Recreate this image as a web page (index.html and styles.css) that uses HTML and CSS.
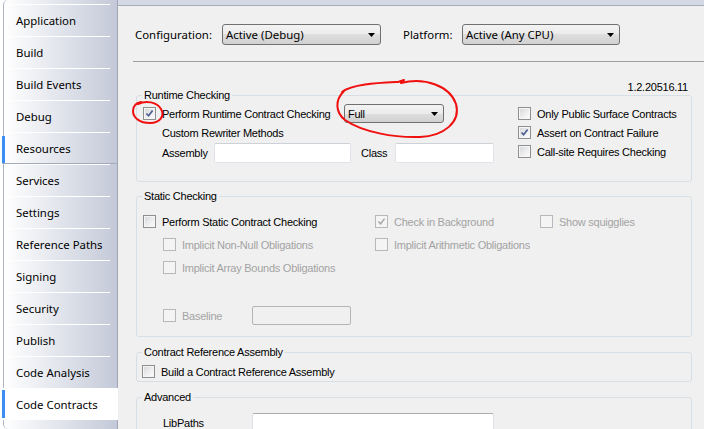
FILE: index.html
```html
<!DOCTYPE html>
<html>
<head>
<meta charset="utf-8">
<title>Code Contracts</title>
<link rel="stylesheet" href="styles.css">
</head>
<body>
<div class="page">
  <nav class="sidebar">
    <div class="tabs">
      <div class="tab">Application</div>
      <div class="tab">Build</div>
      <div class="tab">Build Events</div>
      <div class="tab">Debug</div>
      <div class="tab focus">Resources</div>
      <div class="tab">Services</div>
      <div class="tab">Settings</div>
      <div class="tab">Reference Paths</div>
      <div class="tab">Signing</div>
      <div class="tab">Security</div>
      <div class="tab">Publish</div>
      <div class="tab">Code Analysis</div>
      <div class="tab active">Code Contracts</div>
    </div>
  </nav>
  <main class="main">
    <div class="topband"></div>
    <div class="config">
      <span class="cfg-label">Configuration:</span>
      <div class="combo combo-cfg"><span>Active (Debug)</span><svg class="arrow" width="7" height="4" viewBox="0 0 7 4"><path d="M0 0H7L3.5 4Z"/></svg></div>
      <span class="plat-label">Platform:</span>
      <div class="combo combo-plat"><span>Active (Any CPU)</span><svg class="arrow" width="7" height="4" viewBox="0 0 7 4"><path d="M0 0H7L3.5 4Z"/></svg></div>
    </div>
    <div class="rule"></div>
    <div class="version">1.2.20516.11</div>

    <fieldset class="group g-runtime">
      <legend>Runtime Checking</legend>
      <div class="rt">
        <div class="rt-left">
          <div class="row h19">
            <div class="opt w201"><span class="cb"><svg width="11" height="11" viewBox="0 0 11 11"><path d="M2.5 5.5L4.6 7.8L8.6 2.6" fill="none" stroke="#4b5d8f" stroke-width="1.7"/></svg></span><span>Perform Runtime Contract Checking</span></div>
            <div class="combo combo-full"><span>Full</span><svg class="arrow" width="7" height="4" viewBox="0 0 7 4"><path d="M0 0H7L3.5 4Z"/></svg></div>
          </div>
          <div class="row h19 ind"><span>Custom Rewriter Methods</span></div>
          <div class="row h20 ind mt1">
            <span class="lab-asm">Assembly</span><span class="tb tb-asm"></span>
            <span class="lab-cls">Class</span><span class="tb tb-cls"></span>
          </div>
        </div>
        <div class="rt-right">
          <div class="opt h19"><span class="cb"></span><span>Only Public Surface Contracts</span></div>
          <div class="opt h19"><span class="cb"><svg width="11" height="11" viewBox="0 0 11 11"><path d="M2.5 5.5L4.6 7.8L8.6 2.6" fill="none" stroke="#4b5d8f" stroke-width="1.7"/></svg></span><span>Assert on Contract Failure</span></div>
          <div class="opt h19"><span class="cb"></span><span>Call-site Requires Checking</span></div>
        </div>
      </div>
    </fieldset>

    <fieldset class="group g-static">
      <legend>Static Checking</legend>
      <div class="st">
        <div class="opt c1"><span class="cb"></span><span>Perform Static Contract Checking</span></div>
        <div class="opt dis"><span class="cb"><svg width="11" height="11" viewBox="0 0 11 11"><path d="M2.5 5.5L4.6 7.8L8.6 2.6" fill="none" stroke="#a7a7a7" stroke-width="1.5"/></svg></span><span>Check in Background</span></div>
        <div class="opt dis"><span class="cb"></span><span>Show squigglies</span></div>
        <div class="opt c1i dis"><span class="cb"></span><span>Implicit Non-Null Obligations</span></div>
        <div class="opt dis"><span class="cb"></span><span>Implicit Arithmetic Obligations</span></div>
        <div></div>
        <div class="opt c1i dis"><span class="cb"></span><span>Implicit Array Bounds Obligations</span></div>
        <div></div>
        <div></div>
      </div>
      <div class="row h19 baseline dis">
        <div class="opt w89"><span class="cb"></span><span>Baseline</span></div>
        <span class="tb tb-base"></span>
      </div>
    </fieldset>

    <fieldset class="group g-cra">
      <legend>Contract Reference Assembly</legend>
      <div class="opt h19 cra-row"><span class="cb"></span><span>Build a Contract Reference Assembly</span></div>
    </fieldset>

    <fieldset class="group g-adv">
      <legend>Advanced</legend>
      <div class="row h20 ind2">
        <span class="lab-lib">LibPaths</span><span class="tb tb-lib"></span>
      </div>
    </fieldset>
  </main>

  <svg class="annot" width="704" height="429" viewBox="0 0 704 429">
    <path d="M138 104C146 100 157 102 161 109C165 116 160 123 150 123C140 123 133 118 133 111C133 106 136 103 141 102" fill="none" stroke="#f01010" stroke-width="2" stroke-linecap="round"/>
    <path d="M342 92C352 84 378 83 398 82L404 80L401 83C425 77 450 86 456 104C461 122 444 136 420 137C395 138 362 132 345 120C335 112 335 100 344 91" fill="none" stroke="#f01010" stroke-width="2" stroke-linecap="round" stroke-linejoin="round"/>
  </svg>
</div>
</body>
</html>
```

FILE: styles.css
```css
* { box-sizing: border-box; }
html, body { margin: 0; padding: 0; }
body {
  width: 704px;
  height: 429px;
  overflow: hidden;
  background: #fff;
  font-family: "Liberation Sans", Arial, sans-serif;
  font-size: 11px;
  letter-spacing: -0.25px;
  color: #000;
}
.page {
  position: relative;
  display: flex;
  width: 704px;
  height: 429px;
  overflow: hidden;
}

/* Sidebar */
.sidebar {
  flex: 0 0 118px;
  padding-left: 3px;
  background: #fff;
  display: flex;
}
.tabs {
  flex: 1;
  border-left: 1px solid #aeb4c1;
  border-right: 1px solid #a0a6b4;
  border-radius: 5px 0 0 5px;
  background: linear-gradient(to right, #ffffff, #c3c9d8);
  padding-top: 4px;
  font-family: "Noto Sans", "Open Sans", sans-serif;
  font-size: 11.4px;
  letter-spacing: 0;
}
.tab {
  height: 32px;
  padding-top: 1px;
  line-height: 31px;
  padding-left: 12px;
  background: linear-gradient(#fff, #fff) no-repeat 3px 0 / 103px 1px;
  white-space: nowrap;
}
.tab.focus {
  margin-left: -2px;
  padding-left: 14px;
  background:
    linear-gradient(#3b8ef3, #3b8ef3) no-repeat 0 4px / 3px 27px,
    linear-gradient(#fff, #fff) no-repeat 5px 0 / 103px 1px;
  box-shadow: inset 0 -1px 0 #a2aabb;
}
.tab.active {
  margin-left: -2px;
  margin-right: -1px;
  padding-left: 14px;
  background:
    linear-gradient(#3b8ef3, #3b8ef3) no-repeat 0 2px / 3px 28px,
    #fff;
}

/* Main */
.main {
  flex: 1;
  background: #f0f0f0;
  display: flex;
  flex-direction: column;
  padding-right: 13px;
  min-width: 0;
}
.topband {
  flex: 0 0 6px;
  margin-right: -13px;
  background: #d4dae5;
  border-bottom: 1px solid #a6acb8;
}
.config {
  display: flex;
  align-items: center;
  height: 21px;
  margin-top: 18px;
  padding-left: 17px;
  font-family: "Noto Sans", "Open Sans", sans-serif;
  font-size: 11.4px;
  letter-spacing: 0;
}
.cfg-label { width: 87px; }
.plat-label { width: 59px; margin-left: 22px; }
.combo {
  display: flex;
  align-items: center;
  justify-content: space-between;
  border: 1px solid #707070;
  border-radius: 3px;
  background: linear-gradient(#f3f3f3 0%, #ebebeb 50%, #dedede 50%, #d1d1d1 100%);
  padding: 0 5px 0 3px;
  white-space: nowrap;
}
.combo-cfg { width: 159px; height: 21px; }
.combo-plat { width: 158px; height: 21px; }
.combo-full { width: 100px; height: 19px; padding-left: 3px; }
.arrow { display: block; fill: #000; }

.rule {
  height: 1px;
  margin: 16px -13px 0 15px;
  background: #a0a0a0;
  flex: 0 0 1px;
}
.version {
  margin-top: 19px;
  line-height: 13px;
  text-align: right;
  padding-right: 3px;
}

/* Group boxes */
.group {
  margin: 0 0 0 18px;
  padding: 0;
  width: 556px;
  min-width: 0;
  border: 1px solid #d5dfe5;
  border-radius: 3px;
  flex: none;
}
.group legend {
  margin-left: 5px;
  padding: 0 2px;
  line-height: 14px;
}
.g-runtime { margin-top: -6px; }
.g-static { margin-top: 7px; padding-bottom: 11px; }
.g-cra { margin-top: 8px; padding-top: 3px; }
.cra-row { padding-left: 5px; }
.g-adv { margin-top: 8px; padding-top: 9px; height: 60px; }

.row { display: flex; align-items: center; }
.h19 { height: 19px; }
.h20 { height: 20px; }
.mt1 { margin-top: 1px; }
.ind { padding-left: 25px; }
.ind2 { padding-left: 26px; }

.opt { display: flex; align-items: center; gap: 6px; white-space: nowrap; }
.w201 { width: 201px; flex: none; }
.w89 { width: 89px; flex: none; }

.cb {
  flex: 0 0 13px;
  width: 13px;
  height: 13px;
  border: 1px solid #8e8f8f;
  background: linear-gradient(135deg, #d3d5d9 0%, #eeeeef 55%, #fdfdfd 100%);
  box-shadow: inset 0 0 0 1px #f6f6f6;
  display: flex;
  align-items: center;
  justify-content: center;
}
.cb svg { display: block; }
.dis { color: #a3a3a3; }
.dis .cb {
  border-color: #b8b8b8;
  background: #f4f4f4;
  box-shadow: none;
}

.rt {
  display: grid;
  grid-template-columns: 381px 1fr;
  padding: 2px 0 18px;
}
.rt-left { padding-left: 6px; }
.rt-left .ind { padding-left: 19px; }

.lab-asm { width: 52px; flex: none; }
.lab-cls { width: 34px; flex: none; margin-left: 10px; }
.lab-lib { width: 89px; flex: none; }

.tb {
  display: block;
  height: 20px;
  background: #fff;
  border: 1px solid #e0e4ea;
  border-top-color: #cdd1d8;
  border-radius: 2px;
  flex: none;
}
.tb-asm { width: 137px; }
.tb-cls { width: 99px; }
.tb-lib { width: 242px; border-color: #dfe3e9; border-top-color: #abadb3; }
.tb-base { width: 99px; height: 19px; background: #f0f0f0; border-color: #b2b6b9; }

.st {
  display: grid;
  grid-template-columns: 238px 165px 1fr;
  grid-auto-rows: 23px;
  padding-top: 7px;
}
.c1 { padding-left: 6px; }
.c1i { padding-left: 26px; }
.baseline { margin-top: 27px; padding-left: 26px; }

.annot {
  position: absolute;
  left: 0;
  top: 0;
  pointer-events: none;
}
```
